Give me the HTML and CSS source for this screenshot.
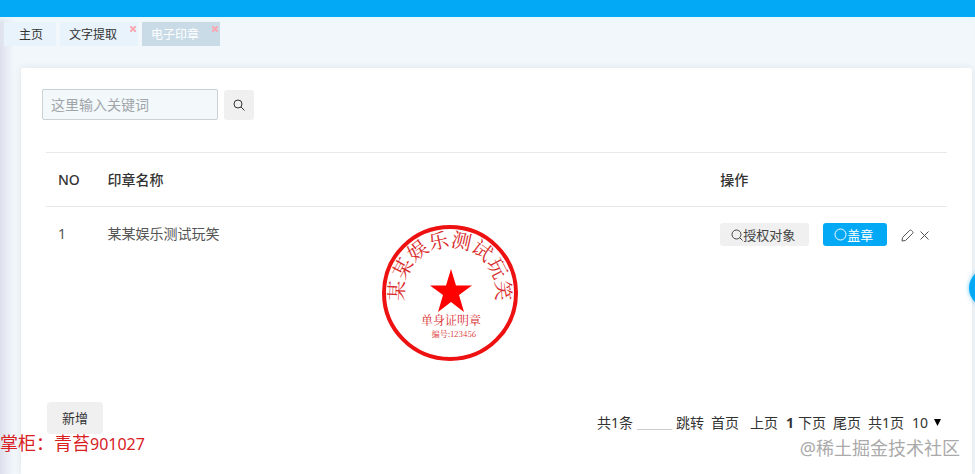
FILE: index.html
```html
<!DOCTYPE html>
<html lang="zh-CN">
<head>
    <meta charset="UTF-8">
    <meta name="viewport" content="width=device-width, initial-scale=1.0">
    <title>电子印章</title>
    <link rel="stylesheet" href="styles.css">
</head>
<body>

    <header class="topbar"></header>

    <nav class="tabs">
        <a class="tab tab-home" href="#">主页</a>
        <div class="tab">
            <a href="#">文字提取</a>
            <button class="tab-close" type="button" aria-label="关闭">
                <svg width="6" height="6" viewBox="0 0 6 6"><path d="M0 0L6 6M6 0L0 6"/></svg>
            </button>
        </div>
        <div class="tab active">
            <a href="#">电子印章</a>
            <button class="tab-close" type="button" aria-label="关闭">
                <svg width="6" height="6" viewBox="0 0 6 6"><path d="M0 0L6 6M6 0L0 6"/></svg>
            </button>
        </div>
    </nav>

    <main class="card">
        <form class="search">
            <input class="search-input" type="text" placeholder="这里输入关键词" aria-label="关键词">
            <button class="search-btn" type="button" aria-label="搜索">
                <svg class="icon" width="12" height="12" viewBox="0 0 12 12"><circle cx="5" cy="5" r="4"/><path d="M8 8L11.5 11.5"/></svg>
            </button>
        </form>

        <table class="list">
            <thead>
                <tr>
                    <th class="col-no">NO</th>
                    <th class="col-name">印章名称</th>
                    <th class="col-seal"></th>
                    <th>操作</th>
                </tr>
            </thead>
            <tbody>
                <tr>
                    <td>1</td>
                    <td>某某娱乐测试玩笑</td>
                    <td>
                        <svg class="seal" width="138" height="138" viewBox="0 0 138 138">
                            <path id="arc" fill="none" d="M69 115A46 46 0 0 1 69 23A46 46 0 0 1 69 115"/>
                            <circle cx="69" cy="69" r="66"/>
                            <text class="seal-name"><textPath href="#arc" startOffset="50%">某某娱乐测试玩笑</textPath></text>
                            <path class="star" d="M70 45L75 61.500H91L78 71L83 88L70 78L57 88L62 71L49 61.500H65Z"/>
                            <text class="seal-type" x="70" y="101">单身证明章</text>
                            <text class="seal-code" x="73" y="113">编号:123456</text>
                        </svg>
                    </td>
                    <td>
                        <div class="ops">
                            <button class="btn" type="button">
                                <svg class="icon" width="12" height="12" viewBox="0 0 12 12"><circle cx="5.500" cy="5.500" r="4.500"/><path d="M8.500 8.500L11.500 11.500"/></svg>授权对象
                            </button>
                            <button class="btn btn-primary" type="button">
                                <svg class="icon" width="13" height="13" viewBox="0 0 13 13"><circle cx="6.500" cy="6.500" r="5.500"/></svg>盖章
                            </button>
                            <button class="icon-btn" type="button" aria-label="编辑">
                                <svg class="icon" width="13" height="13" viewBox="0 0 13 13"><path d="M1 12L1.500 8.500L8.500 1.500Q9.500 .5 10.500 1.500L11.500 2.500Q12.500 3.500 11.500 4.500L4.500 11.500Z"/></svg>
                            </button>
                            <button class="icon-btn" type="button" aria-label="删除">
                                <svg class="icon" width="9" height="9" viewBox="0 0 9 9"><path d="M.5 .5L8.500 8.500M8.500 .5L.5 8.500"/></svg>
                            </button>
                        </div>
                    </td>
                </tr>
            </tbody>
        </table>

        <div class="footer">
            <button class="add-btn" type="button">新增</button>
            <div class="pager">
                <span>共1条</span>
                <input class="page-input" type="text" aria-label="页码">
                <a href="#">跳转</a>
                <a class="first" href="#">首页</a>
                <a class="prev" href="#">上页</a>
                <b>1</b>
                <a href="#">下页</a>
                <a class="last" href="#">尾页</a>
                <span class="total">共1页</span>
                <select class="page-size" aria-label="每页条数">
                    <option>10</option>
                    <option>20</option>
                    <option>50</option>
                </select>
                <svg class="arrow" width="8" height="8" viewBox="0 0 8 8"><path d="M0 0H7L3.500 7Z"/></svg>
            </div>
        </div>
    </main>

    <button class="float-btn" type="button" aria-label="设置"></button>
    <div class="owner">掌柜：青苔<span>901027</span></div>
    <div class="watermark">@稀土掘金技术社区</div>

</body>
</html>
```

FILE: styles.css
```css
* {
    box-sizing: border-box;
}

body {
    margin: 0;
    height: 100vh;
    overflow: hidden;
    position: relative;
    display: flex;
    flex-direction: column;
    font-family: "Noto Sans", "Noto Sans CJK SC", sans-serif;
    font-size: 14px;
    line-height: 20px;
    color: #333;
    background: linear-gradient(to right, #dde0ec, #f2f7fb 14px);
}

a {
    color: inherit;
    text-decoration: none;
}

button, input, select {
    font: inherit;
    color: inherit;
    border: none;
    padding: 0;
    margin: 0;
}

button {
    cursor: pointer;
}

.icon {
    fill: none;
    stroke: currentColor;
    stroke-width: 1;
}

.topbar {
    flex: none;
    height: 17px;
    background-color: #03a9f4;
}

.tabs {
    display: flex;
    gap: 4px;
    padding: 5px 4px 0;
    font-size: 12px;
    line-height: 22px;
    box-shadow: inset 0 4px 4px -2px #e6f8fc;
}

.tab {
    position: relative;
    padding: 2px 21px 0 9px;
    background-color: #e8f3fb;
}

.tab-home {
    padding: 2px 13px 0 15px;
}

.tab.active {
    color: #fff;
    background-color: #c8dbe6;
}

.tab-close {
    position: absolute;
    top: 4px;
    right: 2px;
    display: flex;
    background: none;
}

.tab-close svg {
    stroke: #f9a8b4;
    stroke-width: 2;
}

.card {
    flex: 1;
    margin: 22px 3px 0 21px;
    padding: 21px 25px 0;
    border-radius: 3px 3px 0 0;
    background-color: #fff;
    box-shadow: 0 0 8px rgba(0, 0, 0, 0.08);
}

.search {
    display: flex;
    gap: 6px;
    margin-left: -4px;
}

.search-input {
    width: 176px;
    height: 31px;
    padding: 0 8px;
    border: 1px solid #c9d0d6;
    border-radius: 2px;
    background-color: #f3f8fb;
}

.search-input::placeholder {
    color: #a0a5aa;
}

.search-btn {
    display: flex;
    align-items: center;
    justify-content: center;
    width: 30px;
    height: 30px;
    margin-top: 1px;
    border-radius: 3px;
    background-color: #f0f0f0;
}

.list {
    width: 100%;
    margin-top: 32px;
    border-collapse: collapse;
    table-layout: fixed;
    border-top: 1px solid #e6e8e9;
}

.list th {
    height: 54px;
    padding: 0 12px;
    font-weight: 500;
    text-align: left;
    border-bottom: 1px solid #e6e8e9;
}

.list td {
    height: 180px;
    padding: 17px 12px 0;
    vertical-align: top;
    color: #555;
}

.list td:last-child {
    padding-top: 16px;
    padding-right: 0;
}

.col-no {
    width: 5.5%;
}

.col-name {
    width: 30.4%;
}

.col-seal {
    width: 37.6%;
}

.seal {
    display: block;
}

.seal circle {
    fill: none;
    stroke: #ee1111;
    stroke-width: 4;
}

.seal text {
    fill: #d92a2a;
    font-family: "Noto Serif CJK SC", "Liberation Serif", "Noto Sans CJK SC", serif;
    font-weight: 400;
    text-anchor: middle;
}

.seal .seal-name {
    font-size: 20px;
}

.seal .seal-type {
    font-size: 12px;
}

.seal .seal-code {
    font-size: 8px;
}

.star {
    fill: #ff0000;
}

.ops {
    display: flex;
    align-items: center;
}

.btn {
    display: flex;
    align-items: center;
    height: 23px;
    margin-right: 14px;
    padding: 0 14px 0 11px;
    border-radius: 3px;
    font-size: 13px;
    color: #444;
    background-color: #f0f0f0;
}

.btn-primary {
    padding: 0 14px 0 11px;
    color: #fff;
    background-color: #03a9f4;
}

.icon-btn {
    display: flex;
    margin-right: 6px;
    padding-top: 2px;
    background: none;
}

.footer {
    display: flex;
    align-items: center;
    justify-content: space-between;
    margin-top: 15px;
    padding: 0 5px 0 1px;
}

.add-btn {
    width: 56px;
    height: 32px;
    border-radius: 4px;
    font-size: 13px;
    background-color: #f0f0f0;
}

.pager {
    display: flex;
    align-items: center;
    gap: 4px;
    margin-top: 10px;
}

.page-input {
    width: 35px;
    height: 15px;
    border-bottom: 1px solid #ccc;
    background: none;
}

.first, .last, .total {
    margin-left: 3px;
}

.prev {
    margin-left: 7px;
}

.pager b {
    margin-left: 4px;
}

.page-size {
    appearance: none;
    width: 18px;
    margin-left: 4px;
    background: none;
}

.arrow {
    fill: #000;
}

.float-btn {
    position: absolute;
    top: 269px;
    right: -32px;
    width: 38px;
    height: 38px;
    border-radius: 50%;
    background-color: #03a9f4;
    box-shadow: 0 0 4px rgba(3, 169, 244, 0.6);
}

.owner {
    position: absolute;
    left: 0;
    bottom: 20px;
    font-size: 18px;
    color: #d9201f;
}

.owner span {
    font-size: 16px;
}

.watermark {
    position: absolute;
    right: 15px;
    bottom: 16px;
    font-size: 18px;
    color: #aaa;
}
```
